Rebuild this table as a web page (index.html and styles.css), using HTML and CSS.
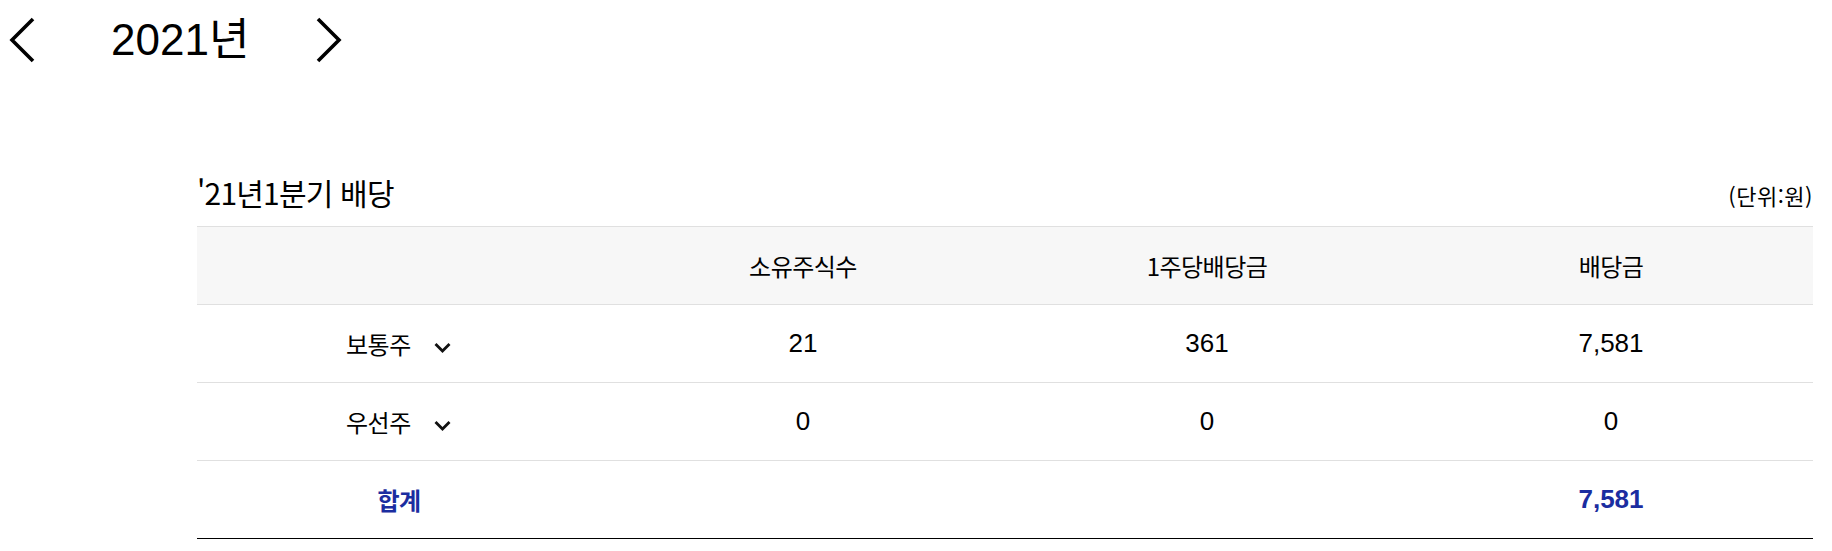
FILE: index.html
```html
<!DOCTYPE html>
<html lang="ko">

<head>
    <meta charset="UTF-8">
    <meta name="viewport" content="width=device-width, initial-scale=1.0">
    <title>배당 내역</title>
    <link rel="stylesheet" href="styles.css">
</head>

<body>
    <!-- 연도 이동 -->
    <div class="year-nav">
        <button class="nav-btn" type="button" aria-label="이전 연도">
            <svg width="26" height="48" viewBox="0 0 26 48">
                <polyline points="24,3 3,24 24,45" fill="none" stroke="#000" stroke-width="3.6" />
            </svg>
        </button>
        <h2 class="year">2021년</h2>
        <button class="nav-btn" type="button" aria-label="다음 연도">
            <svg width="26" height="48" viewBox="0 0 26 48">
                <polyline points="2,3 23,24 2,45" fill="none" stroke="#000" stroke-width="3.6" />
            </svg>
        </button>
    </div>

    <!-- 분기 배당 -->
    <section class="dividend">
        <div class="dividend-head">
            <h3 class="dividend-title">'21년1분기 배당</h3>
            <span class="unit">(단위:원)</span>
        </div>
        <table class="dividend-table">
            <thead>
                <tr>
                    <th></th>
                    <th>소유주식수</th>
                    <th>1주당배당금</th>
                    <th>배당금</th>
                </tr>
            </thead>
            <tbody>
                <tr>
                    <td class="label">보통주 <span class="arrow"><svg width="19" height="11" viewBox="0 0 19 11"><polyline points="2.5,2 9.5,9 16.5,2" fill="none" stroke="#111" stroke-width="2.8" /></svg></span></td>
                    <td class="num">21</td>
                    <td class="num">361</td>
                    <td class="num">7,581</td>
                </tr>
                <tr>
                    <td class="label">우선주 <span class="arrow"><svg width="19" height="11" viewBox="0 0 19 11"><polyline points="2.5,2 9.5,9 16.5,2" fill="none" stroke="#111" stroke-width="2.8" /></svg></span></td>
                    <td class="num">0</td>
                    <td class="num">0</td>
                    <td class="num">0</td>
                </tr>
                <tr class="total">
                    <td class="label">합계</td>
                    <td></td>
                    <td></td>
                    <td class="num">7,581</td>
                </tr>
            </tbody>
        </table>
    </section>
</body>

</html>
```

FILE: styles.css
```css
/* 기본 */
body {
    margin: 0;
    font-family: "Liberation Sans", "Noto Sans CJK KR", sans-serif;
    color: #000;
    background: #fff;
}

/* 연도 이동 */
.year-nav {
    display: flex;
    align-items: center;
    height: 80px;
    padding-left: 9px;
}

.nav-btn {
    border: none;
    background: none;
    padding: 0;
    display: flex;
    cursor: pointer;
}

.year {
    margin: 0 67px 0 76px;
    font-size: 44px;
    font-weight: normal;
    line-height: 1;
}

/* 분기 배당 */
.dividend {
    padding: 0 19px 0 197px;
    margin-top: 92px;
}

.dividend-head {
    display: flex;
    justify-content: space-between;
    align-items: baseline;
    height: 54px;
}

.dividend-title {
    margin: 0;
    font-family: "Noto Sans CJK KR", sans-serif;
    font-size: 30px;
    font-weight: normal;
    letter-spacing: -0.8px;
    line-height: 40px;
}

.unit {
    font-family: "Noto Sans CJK KR", sans-serif;
    font-size: 22px;
    letter-spacing: 0.5px;
}

/* 표 */
.dividend-table {
    width: 100%;
    border-collapse: collapse;
    table-layout: fixed;
}

.dividend-table th {
    height: 77px;
    background: #f7f7f7;
    border-top: 1px solid #e0e0e0;
    border-bottom: 1px solid #e0e0e0;
    font-family: "Noto Sans CJK KR", sans-serif;
    font-size: 24px;
    font-weight: normal;
    letter-spacing: -0.5px;
    padding: 0;
}

.dividend-table td {
    height: 77px;
    border-bottom: 1px solid #e0e0e0;
    text-align: center;
    padding: 0;
}

.dividend-table .label {
    font-family: "Noto Sans CJK KR", sans-serif;
    font-size: 24px;
    letter-spacing: -0.5px;
}

.dividend-table .num {
    font-size: 26px;
}

.arrow {
    display: inline-block;
    margin-left: 16px;
    vertical-align: middle;
    line-height: 0;
}

.total td {
    border-bottom: 1px solid #000;
    color: #1b2da0;
    font-weight: bold;
}
```
